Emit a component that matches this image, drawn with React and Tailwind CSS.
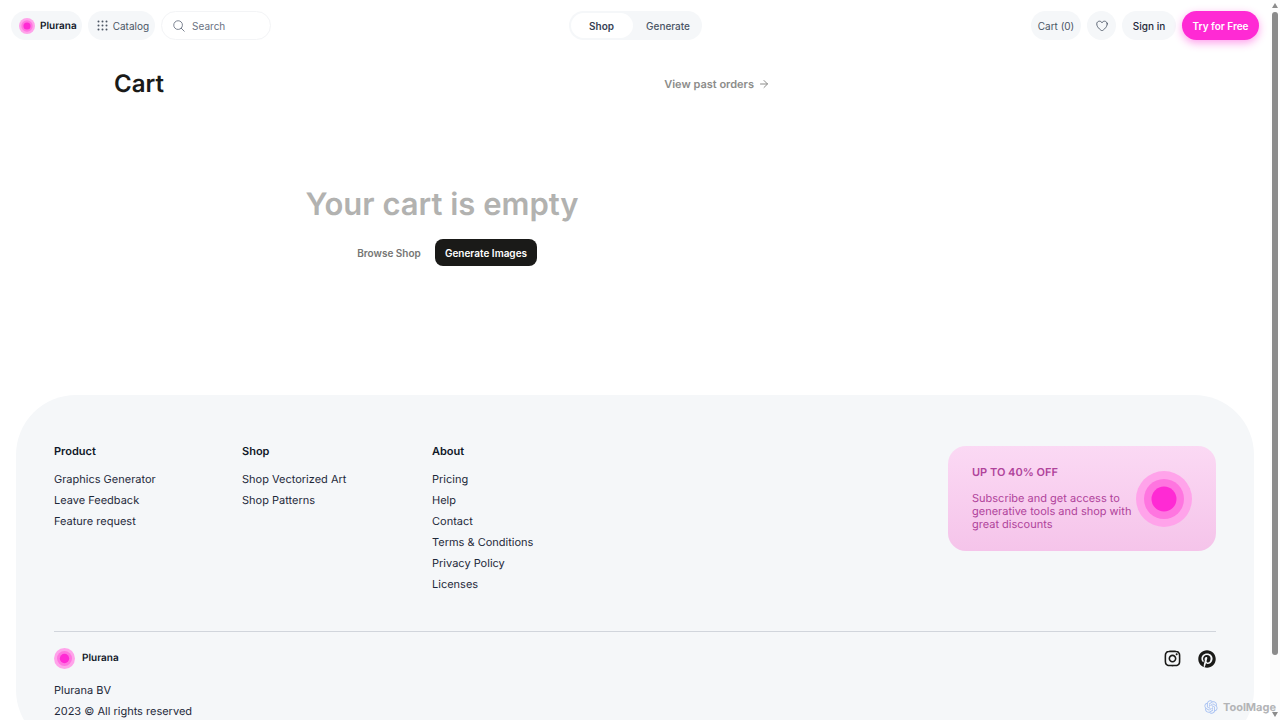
import React, { useState } from "react";
import {
  HiOutlineHeart,
  HiOutlineMagnifyingGlass,
} from "react-icons/hi2";
import { RiInstagramLine, RiOpenaiFill } from "react-icons/ri";
import { FaPinterest } from "react-icons/fa";
import { ArrowRight } from "lucide-react";

const footerColumns = [
  {
    title: "Product",
    links: ["Graphics Generator", "Leave Feedback", "Feature request"],
  },
  {
    title: "Shop",
    links: ["Shop Vectorized Art", "Shop Patterns"],
  },
  {
    title: "About",
    links: [
      "Pricing",
      "Help",
      "Contact",
      "Terms & Conditions",
      "Privacy Policy",
      "Licenses",
    ],
  },
];

const Logo = ({ className }) => (
  <svg viewBox="0 0 56 56" className={className} aria-hidden="true">
    <circle cx="28" cy="28" r="28" fill="#ffa3ea" />
    <circle cx="28" cy="28" r="20" fill="#ff75e0" />
    <circle cx="28" cy="28" r="12.5" fill="#ff2ad4" />
  </svg>
);

const DotsIcon = () => (
  <svg viewBox="0 0 11 11" className="size-[11px]" fill="#4b5563" aria-hidden="true">
    {[1.5, 5.5, 9.5].map((y) =>
      [1.5, 5.5, 9.5].map((x) => (
        <circle key={`${x}-${y}`} cx={x} cy={y} r="1" />
      ))
    )}
  </svg>
);

const Header = () => {
  const [tab, setTab] = useState("Shop");

  return (
    <header className="flex items-center px-[11px] pt-[11px] text-[10px] leading-4 text-gray-600">
      <div className="flex flex-1 items-center gap-1.5">
        <a
          href="#"
          className="flex h-[29px] items-center gap-[5px] rounded-full bg-[#f5f7f9] pr-[5px] pl-2 font-semibold text-gray-900"
        >
          <Logo className="size-4" />
          Plurana
        </a>
        <button className="flex h-[29px] items-center gap-[5px] rounded-full bg-[#f5f7f9] pr-1.5 pl-[9px]">
          <DotsIcon />
          Catalog
        </button>
        <label className="flex h-[29px] w-[110px] items-center gap-1.5 rounded-full border border-gray-100 px-[10px]">
          <HiOutlineMagnifyingGlass className="size-3.5 shrink-0 text-gray-500" />
          <input
            type="text"
            placeholder="Search"
            aria-label="Search"
            className="w-full min-w-0 outline-none placeholder:text-gray-500"
          />
        </label>
      </div>

      <div className="flex h-[29px] items-center rounded-full bg-[#f5f7f9] p-0.5">
        {["Shop", "Generate"].map((name) => (
          <button
            key={name}
            onClick={() => setTab(name)}
            className={
              tab === name
                ? "h-[25px] w-[62px] rounded-full bg-white font-semibold text-gray-700"
                : "h-[25px] w-[67px] rounded-full pl-1 font-medium text-gray-600"
            }
          >
            {name}
          </button>
        ))}
      </div>

      <div className="flex flex-1 items-center justify-end gap-1.5">
        <button className="h-[29px] w-[50px] rounded-full bg-[#f5f7f9]">
          Cart (0)
        </button>
        <button
          aria-label="Favorites"
          className="flex size-[29px] items-center justify-center rounded-full bg-[#f5f7f9]"
        >
          <HiOutlineHeart className="size-3.5" />
        </button>
        <button className="h-[29px] w-[54px] rounded-full bg-[#f5f7f9] font-medium text-gray-800">
          Sign in
        </button>
        <button className="h-[29px] w-[77px] rounded-full bg-[#ff2ad4] font-semibold text-white shadow-[0_3px_8px_rgba(255,42,212,0.45)]">
          Try for Free
        </button>
      </div>
    </header>
  );
};

const EmptyCart = () => (
  <main className="ml-[114px] max-w-[656px] pt-7 pb-[129px]">
    <div className="flex items-center justify-between">
      <h1 className="text-2xl font-semibold text-[#1a1a18]">Cart</h1>
      <a
        href="#"
        className="flex items-center gap-1 text-[11px] font-semibold text-[#8c8c8a]"
      >
        View past orders
        <ArrowRight className="size-3" strokeWidth={2} />
      </a>
    </div>
    <div className="mt-[85px] flex flex-col items-center gap-3.5">
      <h2 className="text-[31px] leading-10 font-semibold text-[#b2b2b0]">
        Your cart is empty
      </h2>
      <div className="flex items-center gap-1 text-[10px] leading-4">
        <button className="h-[27px] w-[84px] rounded-lg font-semibold text-[#757573]">
          Browse Shop
        </button>
        <button className="h-[27px] w-[102px] rounded-lg bg-[#1a1a18] font-semibold text-white">
          Generate Images
        </button>
      </div>
    </div>
  </main>
);

const Footer = () => (
  <footer className="mx-4 rounded-[60px] bg-[#f5f7f9] px-[38px] pt-[51px] pb-7 text-[11px] text-gray-800">
    <div className="flex items-start justify-between pb-9">
      <div className="grid grid-cols-[188px_190px_190px]">
        {footerColumns.map((column) => (
          <div key={column.title}>
            <h3 className="mb-3 leading-[11px] font-semibold text-gray-900">
              {column.title}
            </h3>
            <ul>
              {column.links.map((link) => (
                <li key={link} className="leading-[21px]">
                  <a href="#">{link}</a>
                </li>
              ))}
            </ul>
          </div>
        ))}
      </div>
      <a
        href="#"
        className="flex h-[105px] w-[268px] items-center justify-between rounded-[18px] bg-linear-to-b from-[#fbd9f4] to-[#f5c4ea] px-6 text-[#b0439b]"
      >
        <div className="shrink-0 pb-0.5">
          <h3 className="font-semibold">UP TO 40% OFF</h3>
          <p className="mt-[11px] w-40 leading-[13px]">
            Subscribe and get access to generative tools and shop with great
            discounts
          </p>
        </div>
        <Logo className="-ml-5 size-14 shrink-0" />
      </a>
    </div>
    <div className="flex items-center justify-between border-t border-gray-300 pt-4">
      <a
        href="#"
        className="flex items-center gap-[7px] text-[10px] font-semibold text-gray-900"
      >
        <Logo className="size-[21px]" />
        Plurana
      </a>
      <div className="flex items-center gap-4 text-[#1a1a18]">
        <a href="#" aria-label="Instagram">
          <RiInstagramLine className="size-[19px]" />
        </a>
        <a href="#" aria-label="Pinterest">
          <FaPinterest className="size-[18px]" />
        </a>
      </div>
    </div>
    <div className="mt-[11px] leading-[21px]">
      <p>Plurana BV</p>
      <p>2023 © All rights reserved</p>
    </div>
  </footer>
);

const Scrollbar = () => (
  <div
    className="flex w-[10px] shrink-0 flex-col items-center justify-between bg-[#fcfcfc] py-[3px]"
    aria-hidden="true"
  >
    <svg viewBox="0 0 6 5" className="h-[5px] w-1.5" fill="#8b8b8b">
      <path d="M3 0 6 5H0z" />
    </svg>
    <div className="mt-1 mb-auto h-[90%] w-1.5 rounded-full bg-[#8b8b8b]" />
    <svg viewBox="0 0 6 5" className="h-[5px] w-1.5" fill="#8b8b8b">
      <path d="M0 0h6L3 5z" />
    </svg>
  </div>
);

const App = () => {
  return (
    <div className="relative flex h-screen overflow-hidden bg-white font-['Inter',sans-serif] [text-rendering:geometricPrecision]">
      <div className="min-w-0 flex-1">
        <Header />
        <EmptyCart />
        <Footer />
      </div>
      <Scrollbar />
      <div className="absolute right-1 bottom-[5px] flex items-center gap-1 text-[11px] leading-4 font-bold text-[#b3b4b6]">
        <RiOpenaiFill className="size-4 text-[#a9c2f2]" />
        ToolMage
      </div>
    </div>
  );
};

export default App;
